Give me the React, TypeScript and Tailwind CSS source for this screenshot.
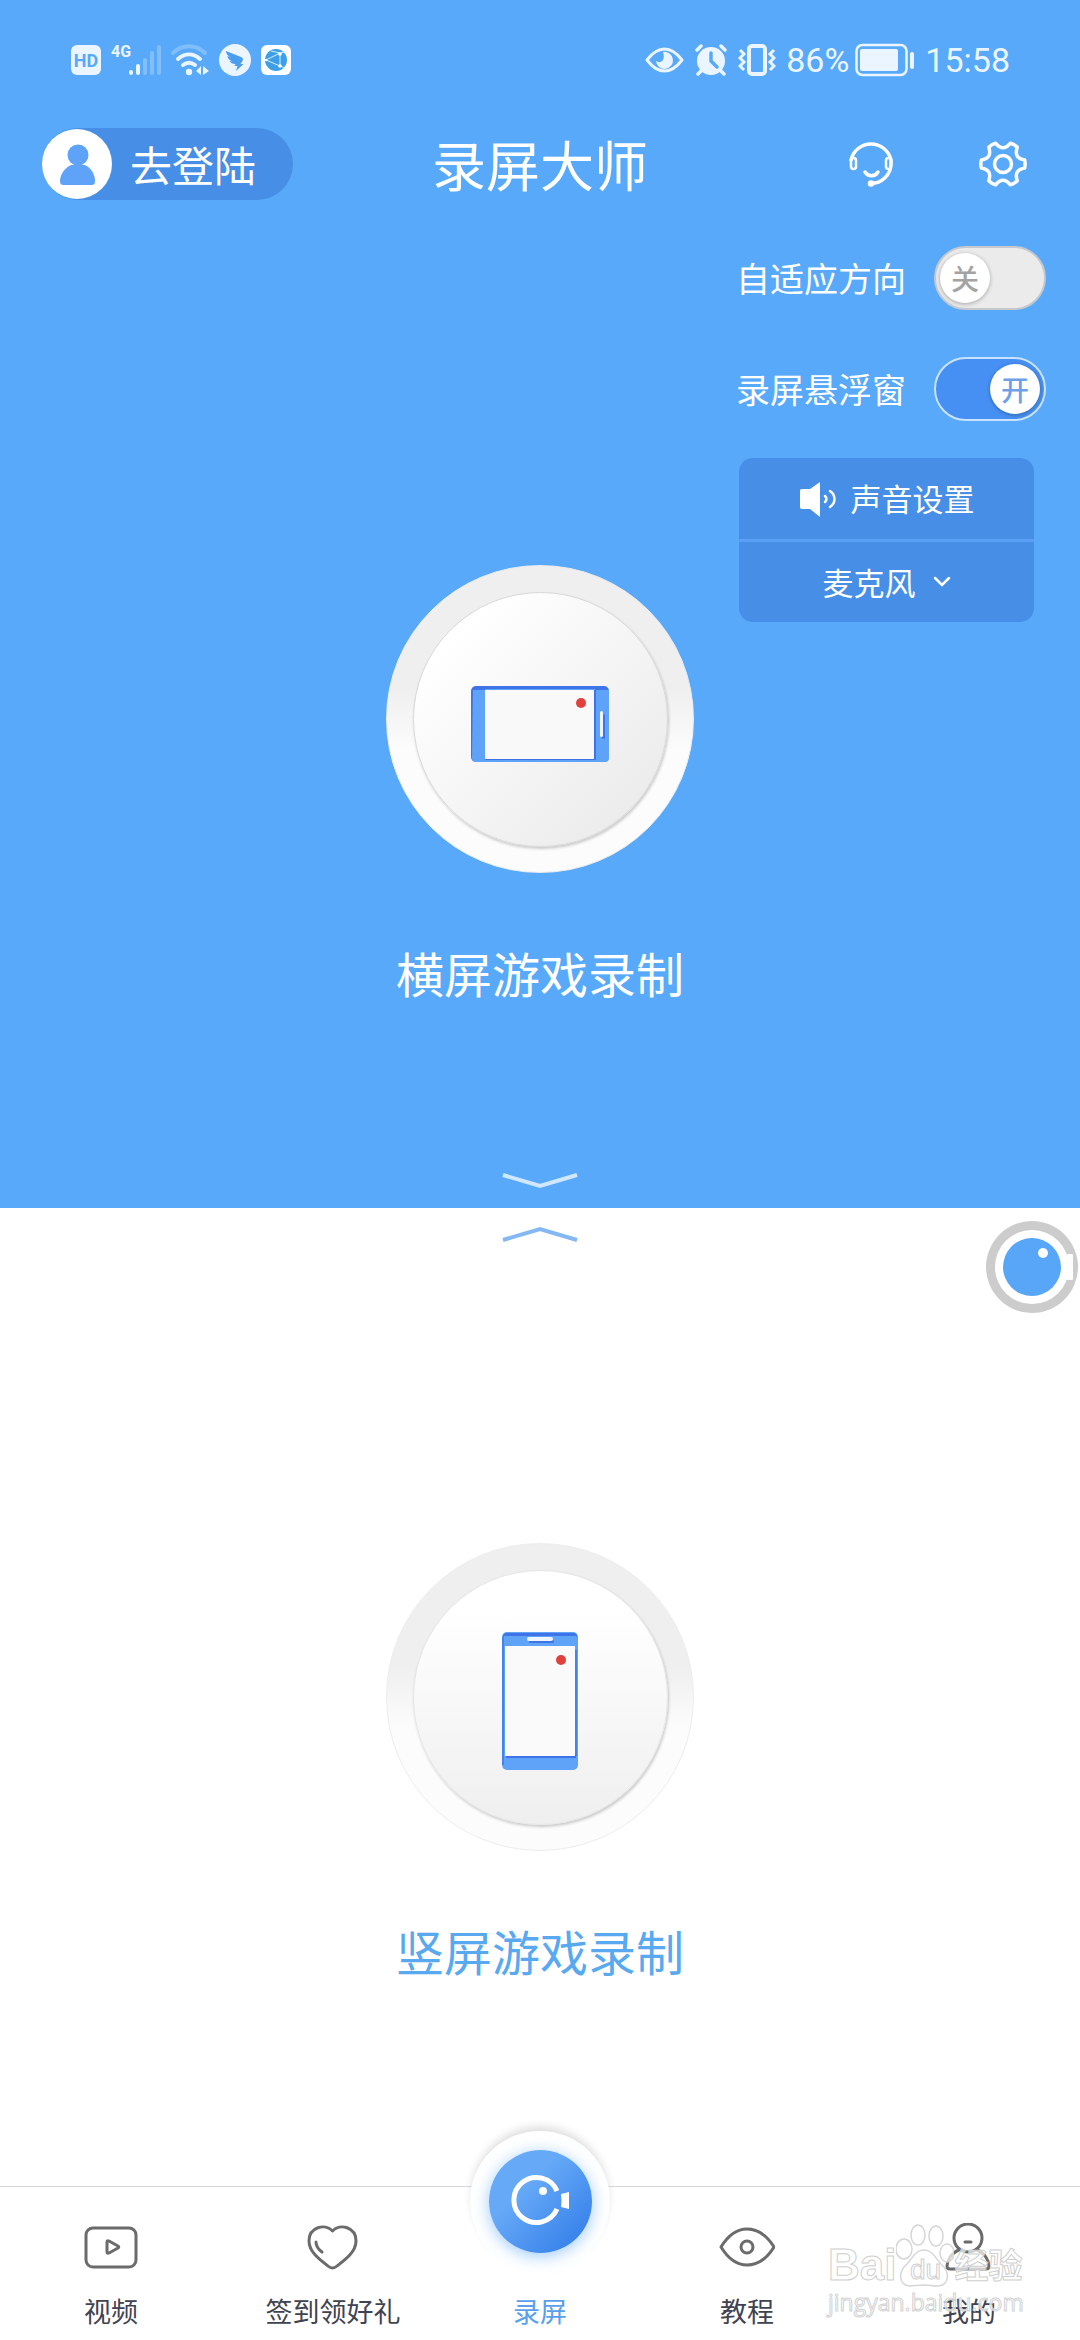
import React, { useState } from 'react';

const TEETH_PATH =
  'M21.7 4Q10.400 6 14.300 16.800Q11.400 19.800 7.400 20.800Q0 11.500 -7.400 20.800Q-11.400 19.800 -14.300 16.800Q-10.400 6 -21.7 4Q-22.500 0 -21.7 -4Q-10.400 -6 -14.300 -16.800Q-11.400 -19.800 -7.400 -20.800Q0 -11.500 7.400 -20.800Q11.400 -19.800 14.300 -16.800Q10.400 -6 21.7 -4Q22.500 0 21.7 4Z';

const StatusBar = () => (
  <div className="flex h-[44px] items-center justify-between pl-[71px] pr-[70px] text-[#ebf5ff]">
    <div className="flex items-center gap-[10px]">
      <span className="flex h-[30px] w-[30px] items-center justify-center rounded-[6px] bg-[#ebf5ff] font-[Roboto,sans-serif] text-[18px] font-bold text-[#58a9f9]">
        HD
      </span>
      <div className="flex h-[32px] w-[50px]">
        <span className="font-[Roboto,sans-serif] text-[16px] leading-[16px] font-bold">4G</span>
        <svg className="-ml-[4px] h-[32px] w-[35px] shrink-0" viewBox="0 0 35 32" stroke="currentColor" strokeWidth="4" strokeLinecap="round">
          <path d="M4 29v-1M11 29v-7" />
          <path d="M18 29V16M25 29V9M32 29V3" opacity=".28" />
        </svg>
      </div>
      <svg className="h-[32px] w-[38px]" viewBox="0 0 38 32" fill="none" stroke="currentColor" strokeWidth="4" strokeLinecap="round">
        <path d="M2 9C11 0 25 0 34 9" opacity=".28" />
        <path d="M7 15c7-6 15-6 22 0M12 21c4-3 8-3 12 0" />
        <circle cx="18" cy="28" r="3.2" fill="currentColor" stroke="none" />
        <path d="M30 22v9l-5-4zM32 22v9l6-4z" fill="currentColor" stroke="none" />
      </svg>
      <svg className="h-[32px] w-[32px]" viewBox="0 0 32 32">
        <circle cx="16" cy="16" r="16" fill="currentColor" />
        <path d="M7 7l15 6c2 1 2.500 2.500 1.500 4l-2 3h3L17 27l1.500-5h-3l1-2c-3 0-5-1-6-3l3 .5C10 16 8.500 14 8.500 12l3 1.500C9 12 7 10 7 7z" fill="#4b9df0" />
      </svg>
      <svg className="h-[30px] w-[30px]" viewBox="0 0 30 30">
        <rect width="30" height="30" rx="6" fill="#fff" />
        <circle cx="15" cy="15" r="11" fill="#3d9fe8" />
        <path d="M5 15l14-7v13L5 15M19 8l5-1M19 21l5 2M10 6l9 2" fill="none" stroke="#d8f0ff" strokeWidth="1" />
        <circle cx="19" cy="9" r="1.800" fill="#fff" />
        <circle cx="19" cy="21" r="1.800" fill="#fff" />
        <circle cx="5" cy="15" r="1.200" fill="#fff" />
      </svg>
    </div>
    <div className="flex items-center gap-[10px]">
      <svg className="h-[28px] w-[39px]" viewBox="0 0 39 28">
        <path d="M2 14C8 6 13 3 19.500 3S31 6 37 14C31 22 26 25 19.500 25S8 22 2 14z" fill="none" stroke="currentColor" strokeWidth="3" strokeLinejoin="round" />
        <path d="M18 6a8.500 8.500 0 1 1-7 9c4 3 10 0 7-9z" fill="currentColor" />
      </svg>
      <svg className="h-[32px] w-[34px]" viewBox="0 0 34 32">
        <circle cx="17" cy="17" r="14" fill="currentColor" />
        <path d="M3 6l4-4M31 6l-4-4M7 27l-3 3M27 27l3 3" stroke="currentColor" strokeWidth="3.500" strokeLinecap="round" />
        <path d="M17 9v8l6 6" fill="none" stroke="#58a9f9" strokeWidth="3.500" strokeLinecap="round" />
      </svg>
      <svg className="h-[32px] w-[38px]" viewBox="0 0 38 32" fill="none" stroke="currentColor" strokeWidth="4">
        <rect x="11" y="2" width="16" height="28" rx="3" />
        <path d="M2 6l4 4-4 4 4 4-4 4 4 4M36 6l-4 4 4 4-4 4 4 4-4 4" strokeWidth="3" />
      </svg>
      <div className="flex items-center gap-[6px]">
        <span className="font-[Roboto,sans-serif] text-[34px] leading-[44px]">86%</span>
        <svg className="h-[34px] w-[60px]" viewBox="0 0 60 34">
          <rect x="1.500" y="2" width="50" height="30" rx="6" fill="none" stroke="currentColor" strokeWidth="2.500" />
          <rect x="5" y="6" width="38" height="22" rx="2" fill="currentColor" />
          <rect x="55" y="9" width="4" height="17" rx="2" fill="currentColor" />
        </svg>
      </div>
      <time className="font-[Roboto,sans-serif] text-[34px] leading-[44px]">15:58</time>
    </div>
  </div>
);

interface ToggleProps {
  label: string;
  checked: boolean;
  onChange: (checked: boolean) => void;
}

const Toggle: React.FC<ToggleProps> = ({ label, checked, onChange }) => (
  <label className="relative flex cursor-pointer items-center gap-[28px] text-[34px] leading-[48px] text-white">
    {label}
    <input
      type="checkbox"
      className="sr-only"
      checked={checked}
      onChange={(e) => onChange(e.target.checked)}
    />
    <span
      aria-hidden="true"
      className={
        checked
          ? 'flex h-[64px] w-[112px] items-center justify-end rounded-full border-2 border-[#c9e3ff] bg-[#4790f3] px-[4px]'
          : 'flex h-[64px] w-[112px] items-center justify-start rounded-full border-2 border-[#c5c9cd] bg-[#ebebeb] px-[4px]'
      }
    >
      <span
        className={
          checked
            ? 'flex h-[50px] w-[50px] items-center justify-center rounded-full bg-white text-[28px] font-medium text-[#6f9fe6] shadow-[0_1px_4px_rgba(0,0,0,0.3)]'
            : 'flex h-[50px] w-[50px] items-center justify-center rounded-full bg-white text-[28px] font-medium text-[#a3a3a3] shadow-[0_1px_4px_rgba(0,0,0,0.3)]'
        }
      >
        {checked ? '开' : '关'}
      </span>
    </span>
  </label>
);

const PhoneLandscape = () => (
  <svg className="h-[76px] w-[138px]" viewBox="0 0 138 76">
    <rect width="138" height="76" rx="5" fill="#3f74e8" />
    <path d="M2 4h12v72H5a4 4 0 0 1-4-4z" fill="#5ea3f7" />
    <path d="M125 4h13v68a4 4 0 0 1-4 4h-9z" fill="#5ea3f7" />
    <path d="M14 3h110v1H14zM14 74h112v2H14z" fill="#5ea3f7" />
    <rect x="14" y="4" width="109" height="69" fill="#f9f9f9" />
    <rect x="131" y="28" width="3" height="25" rx="1.500" fill="#3f74e8" />
    <rect x="129" y="25" width="3" height="26" rx="1.500" fill="#eef5ff" />
    <circle cx="110" cy="17" r="5" fill="#e2403a" />
  </svg>
);

const PhonePortrait = () => (
  <svg className="h-[138px] w-[76px]" viewBox="0 0 76 138">
    <rect width="76" height="138" rx="5" fill="#5ea3f7" />
    <path d="M1 5a4 4 0 0 1 4-4h66a4 4 0 0 1 4 4z" fill="#3f74e8" />
    <path d="M2 4h72v2H2z" fill="#5ea3f7" />
    <path d="M1 5v128M74 18v106" stroke="#4583ec" strokeWidth="2" />
    <rect x="4" y="123" width="70" height="3" fill="#3f74e8" />
    <rect x="3" y="14" width="70" height="110" fill="#fafafa" />
    <rect x="27" y="8" width="25" height="3" rx="1.500" fill="#3f74e8" />
    <rect x="25" y="5" width="26" height="4" rx="2" fill="#eef5ff" />
    <circle cx="59" cy="28" r="5" fill="#e2403a" />
  </svg>
);

interface RecordButtonProps {
  label: string;
  labelClass: string;
  discClass: string;
  children: React.ReactNode;
}

const RecordButton: React.FC<RecordButtonProps> = ({ label, labelClass, discClass, children }) => (
  <button type="button" className="flex flex-col items-center gap-[71px]">
    <span className="flex h-[308px] w-[308px] items-center justify-center rounded-full border border-[#ededed] bg-linear-to-b from-[#efefef] from-40% to-[#fcfcfc] to-60%">
      <span className={discClass}>{children}</span>
    </span>
    <span className={labelClass}>{label}</span>
  </button>
);

interface NavItemProps {
  label: string;
  children: React.ReactNode;
}

const NavItem: React.FC<NavItemProps> = ({ label, children }) => (
  <a href="#" className="flex flex-1 flex-col items-center gap-[22px] pt-[36px] text-[#3f4350]">
    <svg className="h-[48px] w-[56px]" viewBox="0 0 56 48" fill="none" stroke="#6b6b6b" strokeWidth="3" strokeLinecap="round" strokeLinejoin="round">
      {children}
    </svg>
    <span className="text-[27px] leading-[36px]">{label}</span>
  </a>
);

const Watermark = () => (
  <div
    aria-hidden="true"
    className="pointer-events-none absolute right-[56px] bottom-[23px] flex w-[196px] flex-col font-['Open_Sans','Noto_Sans_CJK_SC',sans-serif] text-white/70"
  >
    <div className="flex items-end">
      <span className="font-['Liberation_Sans',sans-serif] text-[44px] leading-[44px] font-bold [-webkit-text-stroke:1px_#cfcfcf]">
        Bai
      </span>
      <span className="relative flex h-[64px] w-[58px] shrink-0 items-end justify-center">
        <svg className="absolute inset-0 h-[64px] w-[58px]" viewBox="0 0 58 64" fill="#fff" fillOpacity=".7" stroke="#d6d6d6" strokeWidth="1.500">
          <ellipse cx="8" cy="26" rx="8" ry="10" />
          <ellipse cx="22" cy="12" rx="7" ry="10" />
          <ellipse cx="40" cy="13" rx="7" ry="10" />
          <ellipse cx="51" cy="30" rx="7" ry="9" />
          <path d="M28 27c9 0 11 8 17 14 9 8 9 21-3 22-6 0-8-1-14-1s-9 1-14 1C2 62 2 49 11 41c6-6 8-14 17-14z" />
        </svg>
        <span className="relative font-['Liberation_Sans',sans-serif] text-[28px] leading-[34px] [-webkit-text-stroke:1px_#cfcfcf]">du</span>
      </span>
      <span className="text-[34px] leading-[44px] font-bold [-webkit-text-stroke:1px_#cfcfcf]">经验</span>
    </div>
    <span className="text-[23px] leading-[30px] [-webkit-text-stroke:1px_#d3d3d3]">jingyan.baidu.com</span>
  </div>
);

export default function App() {
  const [autoRotate, setAutoRotate] = useState(false);
  const [floatWindow, setFloatWindow] = useState(true);

  return (
    <div className="relative flex min-h-screen flex-col bg-white font-['Noto_Sans_CJK_SC',sans-serif]">
      <section className="relative flex flex-col bg-[#58a9f9] pt-[38px] pb-[19px]">
        <StatusBar />

        <header className="mt-[46px] grid grid-cols-[1fr_auto_1fr] items-center px-[42px]">
          <button
            type="button"
            className="flex h-[72px] w-[251px] items-center gap-[17px] rounded-full bg-[#478ee6] text-[42px] leading-[60px] text-white"
          >
            <svg className="h-[72px] w-[71px] shrink-0" viewBox="0 0 71 72">
              <circle cx="35" cy="36" r="35" fill="#fff" />
              <circle cx="36" cy="27" r="10.500" fill="#5ea3f7" />
              <path d="M29 37h14c6 3 10 9 10 16 0 3-1 4-4 4H22c-3 0-4-1-4-4 0-7 5-13 11-16z" fill="#5ea3f7" />
            </svg>
            去登陆
          </button>
          <h1 className="text-[54px] leading-[72px] text-white">录屏大师</h1>
          <div className="flex items-center justify-end gap-[84px] pr-[11px]">
            <button type="button" aria-label="客服">
              <svg className="h-[48px] w-[48px]" viewBox="0 0 48 48" fill="none" stroke="#fff" strokeWidth="3.500" strokeLinecap="round">
                <path d="M4 20A20.500 20.500 0 0 1 44 20v4A20 20 0 0 1 24 43.500" />
                <rect x="4" y="18" width="5" height="11" rx="2.500" strokeWidth="2.500" />
                <rect x="39" y="18" width="5" height="11" rx="2.500" strokeWidth="2.500" />
                <path d="M18 32c3 5 10 5 13 0" />
                <circle cx="24" cy="43.500" r="1.500" fill="#fff" />
              </svg>
            </button>
            <button type="button" aria-label="设置">
              <svg className="h-[48px] w-[48px]" viewBox="-24 -24 48 48" fill="none" stroke="#fff" strokeWidth="3.500" strokeLinejoin="round">
                <path d={TEETH_PATH} />
                <circle r="8.500" />
              </svg>
            </button>
          </div>
        </header>

        <div className="mt-[46px] grid grid-cols-[1fr_auto_1fr]">
          <div />
          <div className="pt-[319px]">
            <RecordButton
              label="横屏游戏录制"
              labelClass="text-[48px] leading-[56px] text-white"
              discClass="flex h-[255px] w-[255px] items-center justify-center rounded-full border border-[#d9d9d9] bg-linear-to-br from-white from-15% to-[#ececec] to-85% pt-[10px] shadow-[1px_2px_3px_rgba(0,0,0,0.2)]"
            >
              <PhoneLandscape />
            </RecordButton>
          </div>
          <div className="flex flex-col items-end pr-[34px]">
            <Toggle label="自适应方向" checked={autoRotate} onChange={setAutoRotate} />
            <div className="h-[47px]" />
            <Toggle label="录屏悬浮窗" checked={floatWindow} onChange={setFloatWindow} />
            <div className="mt-[37px] mr-[12px] w-[295px] overflow-hidden rounded-[14px] bg-[#478ee6] text-[31px] text-white">
              <button
                type="button"
                className="flex h-[84px] w-full items-center justify-center gap-[14px] border-b-3 border-[#5a9ff5]"
              >
                <svg className="h-[36px] w-[38px]" viewBox="0 0 38 36" fill="none" stroke="#fff" strokeLinecap="round">
                  <path d="M3 8h8L21 1v35L11 28H3c-2 0-2-1-2-3V11c0-2 0-3 2-3z" fill="#fff" stroke="none" />
                  <path d="M26 15c2 2 2 4 0 6" strokeWidth="2.500" />
                  <path d="M31 10c6 4 6 12 0 16" strokeWidth="2.500" />
                </svg>
                声音设置
              </button>
              <div className="flex h-[80px] items-center justify-center gap-[17px]">
                <select aria-label="音源" className="appearance-none bg-transparent leading-[48px]">
                  <option>麦克风</option>
                </select>
                <svg className="h-[14px] w-[18px]" viewBox="0 0 18 14" fill="none" stroke="#fff" strokeWidth="2.500" strokeLinecap="round">
                  <path d="M2 3l7 7 7-7" />
                </svg>
              </div>
            </div>
          </div>
        </div>

        <svg className="mt-[173px] h-[16px] w-[76px] self-center" viewBox="0 0 76 16" fill="none" stroke="#cfe8ff" strokeWidth="4">
          <path d="M1 2l37 11L75 2" />
        </svg>
      </section>

      <section className="relative flex flex-1 flex-col items-center pt-[18px] pb-[40px]">
        <svg className="h-[16px] w-[76px]" viewBox="0 0 76 16" fill="none" stroke="#83b8f5" strokeWidth="4">
          <path d="M1 14L38 3l37 11" />
        </svg>
        <div className="mt-[301px]">
          <RecordButton
            label="竖屏游戏录制"
            labelClass="text-[48px] leading-[56px] text-[#58a9f0]"
            discClass="flex h-[255px] w-[255px] items-center justify-center rounded-full border border-[#e6e6e6] bg-linear-to-b from-white from-15% to-[#efefef] pt-[8px] shadow-[1px_2px_3px_rgba(0,0,0,0.2)]"
          >
            <PhonePortrait />
          </RecordButton>
        </div>

        {/* floating recorder ball */}
        <button type="button" aria-label="悬浮窗" className="absolute top-[13px] right-[2px]">
          <svg className="h-[92px] w-[92px]" viewBox="0 0 92 92">
            <circle cx="46" cy="46" r="46" fill="#ccc" />
            <circle cx="46" cy="46" r="37" fill="#fff" />
            <rect x="81" y="33" width="6" height="26" rx="1" fill="#fff" />
            <circle cx="46" cy="46" r="29" fill="#58a6f7" />
            <circle cx="57" cy="32" r="5" fill="#fff" />
          </svg>
        </button>
      </section>

      <nav className="flex border-t border-[#d9d9d9] bg-white pb-[11px]">
        <NavItem label="视频">
          <rect x="3" y="5" width="50" height="39" rx="7" />
          <path d="M24 19v10q0 2 2 1l9-5q1.500-1 0-2l-9-5q-2-1-2 1z" />
        </NavItem>
        <NavItem label="签到领好礼">
          <path d="M27.500 8C20 0 4 4 4 18c0 11 11 19 19 25q4.500 4 9 0c8-6 19-14 19-25C51 4 35 0 27.500 8z" />
          <path d="M11 19c0 4 2 7 6 10" />
        </NavItem>
        <a href="#" className="flex w-[192px] flex-col items-center justify-between text-[#58a0ea]">
          <span className="-mt-[56px] flex h-[140px] w-[140px] items-center justify-center rounded-full bg-white shadow-[0_-6px_10px_-2px_rgba(0,0,0,0.14)]">
            <span className="flex h-[103px] w-[103px] items-center justify-center rounded-full bg-linear-to-br from-[#66a9f7] from-35% to-[#3580ea] to-90% shadow-[0_3px_16px_rgba(88,166,247,0.6)]">
              <svg className="h-[56px] w-[60px]" viewBox="0 0 60 56" fill="none" stroke="#fff" strokeWidth="5">
                <path d="M47 18A22.500 22.500 0 1 0 47 36" />
                <circle cx="33" cy="18" r="4" fill="#fff" stroke="none" />
                <path d="M51 21l8-2v17l-8-2q1-6 0-13z" fill="#fff" stroke="none" />
              </svg>
            </span>
          </span>
          <span className="text-[27px] leading-[36px]">录屏</span>
        </a>
        <NavItem label="教程">
          <path d="M2 24C10 11 18 6 28 6s19 5 27 18C47 37 38 42 28 42S10 37 2 24z" />
          <circle cx="28" cy="24" r="6" />
        </NavItem>
        <NavItem label="我的">
          <circle cx="27" cy="15" r="14" />
          <path d="M24 19h6M18 27C10 30 6 38 6 43q0 3 3 3h36q3 0 3-3C48 38 44 30 36 27" />
        </NavItem>
      </nav>

      <Watermark />
    </div>
  );
}
